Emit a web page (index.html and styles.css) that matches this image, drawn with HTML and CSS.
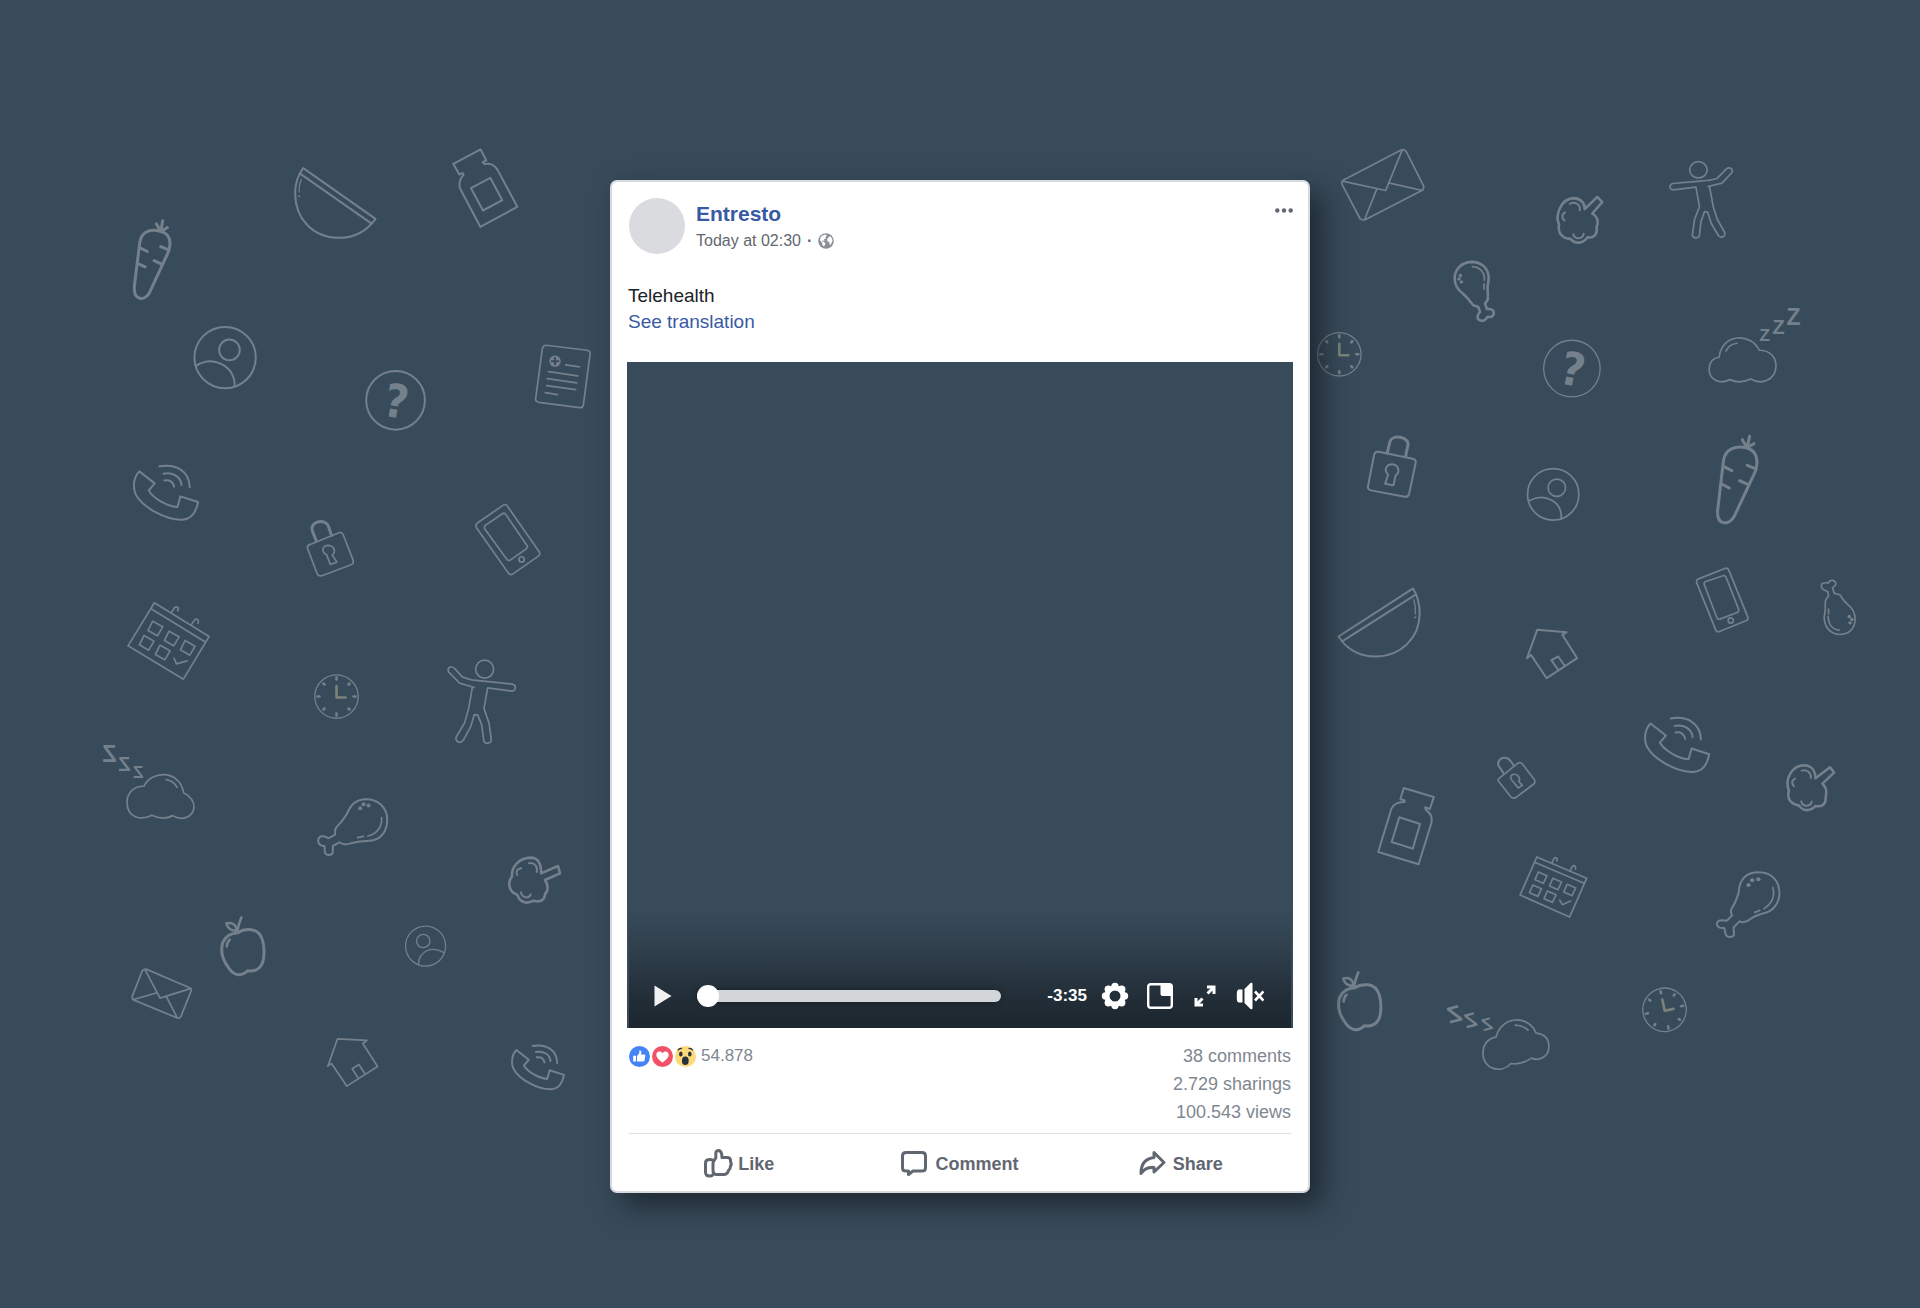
FILE: index.html
```html
<!DOCTYPE html>
<html lang="en">
<head>
<meta charset="utf-8">
<meta name="viewport" content="width=device-width, initial-scale=1">
<title>Entresto - Telehealth</title>
<link rel="stylesheet" href="styles.css">
</head>
<body>
<svg class="doodles" viewBox="0 0 1920 1308" preserveAspectRatio="xMidYMid slice" aria-hidden="true">
  <defs>
    <g id="clock">
      <circle class="thin" r="21.7"/>
      <path class="bold" d="M0-17v-2M0 17v2M-17 0h-2M17 0h2M-12-12l-1-1M12-12l1-1M-12 12l-1 1M12 12l1 1"/>
      <path class="hands" d="M0-10.500V1H9"/>
    </g>
    <g id="call">
      <path d="M120 96L166 132L148 153C160 175 200 200 234 203L243 171L296 188C290 220 275 240 248 241C200 242 130 205 109 165C98 140 105 110 120 96Z"/>
      <path d="M180 81C230 72 270 95 271 144M192 103C220 98 245 112 246 137M195 123C210 120 222 128 224 142"/>
    </g>
    <g id="apple">
      <path class="heavy" d="M445 636Q412 638 400 665C390 700 405 725 420 745C438 768 460 765 474 750C500 755 518 740 522 715C527 680 522 630 485 627Q462 625 445 636Z"/>
      <path class="bold" d="M443 634Q447 610 456 590M443 630Q415 630 411 608Q438 602 443 630ZM421 657Q412 665 412 677"/>
    </g>
    <path id="day" d="M-8-22L22-5L6 22L-22 6Z"/>
    <path id="day-small" d="M-7-17L17-6L7 17L-16 6Z"/>
  </defs>

  <!-- left side, top -->
  <g transform="translate(100 130) scale(.33333)">
    <path class="heavy" d="M184 304C162 296 126 298 121 338L105 468C102 513 135 513 150 488L208 363C217 333 210 310 184 304Z"/>
    <path class="heavy" d="M184 304L171 281M184 304L190 272M184 304L204 292M120 352L144 364M116 400L137 410M184 349L208 359M164 391L187 402"/>
    <path d="M611 114L828 266C800 305 765 323 718 323C640 323 587 265 587 190C587 160 595 135 611 114ZM604 132L814 279"/>
    <path class="thin" d="M605 148Q598 165 599 185"/><circle class="dot" cx="599" cy="198" r="3"/>
    <path d="M1061 101L1143 58L1160 91L1149 96L1155 102C1170 98 1185 105 1194 120L1253 230L1142 290L1083 178C1076 165 1080 145 1092 134L1089 129L1079 133ZM1114 174L1172 143L1208 210L1150 241Z"/>
    <circle cx="377" cy="682" r="92"/><circle cx="390" cy="659" r="31"/><path d="M291 706C340 675 405 705 406 767"/>
    <circle cx="888" cy="810" r="88"/>
    <path class="fine" d="M1340 645L1462 660Q1473 662 1471 672L1451 824Q1449 833 1440 832L1317 816Q1306 813 1308 804L1328 655Q1330 645 1340 645Z"/>
    <path class="fine" d="M1398 704L1439 710M1347 724L1434 737M1343 745L1431 758M1341 766L1428 778M1337 787L1373 793"/>
    <circle class="dot" cx="1366" cy="693" r="17"/><path class="cut" d="M1366 683V703M1356 693H1376"/>
  </g>
  <text class="mark" transform="translate(394 417) rotate(10)">?</text>

  <!-- left side, middle -->
  <g transform="translate(100 439) scale(.33333)">
    <use href="#call"/>
    <path class="fine" d="M632 315L718 280Q727 277 731 286L761 363Q763 372 755 376L667 409Q657 411 653 403L624 327Q622 318 632 315Z"/>
    <path class="heavy" d="M650 304L638 273C632 243 680 238 687 261L696 288"/>
    <path class="fine" d="M682 347C662 335 670 318 687 318C705 320 710 338 698 347L712 368L692 375Z"/>
    <path class="fine" d="M1133 251L1210 198Q1218 193 1223 200L1319 338Q1323 345 1316 350L1239 404Q1231 408 1226 401L1130 264Q1127 256 1133 251Z"/>
    <path class="fine" d="M1157 258L1208 223Q1215 219 1219 226L1282 318Q1285 324 1280 328L1232 362Q1225 364 1222 360L1155 268Q1153 262 1157 258Z"/>
    <circle class="fine" cx="1266" cy="360" r="8"/>
    <path class="fine" d="M165 490L329 591L252 719L86 619ZM155 508L319 608M217 518L225 505C233 498 240 505 235 514M277 554L285 542C293 535 300 542 296 551M224 656L231 673L263 664"/>
    <g class="fine"><use href="#day" x="168" y="567"/><use href="#day" x="217" y="597"/><use href="#day" x="265" y="625"/><use href="#day" x="142" y="610"/><use href="#day" x="190" y="639"/></g>
    <circle class="fine" cx="1155" cy="689" r="27"/>
    <path class="fine" d="M1116 721L1238 734Q1248 737 1247 746Q1245 755 1236 755L1164 745L1153 807L1168 850L1175 900Q1175 910 1164 911Q1153 911 1152 900L1146 855L1134 826L1124 825L1113 862L1091 902Q1083 912 1073 906Q1066 898 1071 890L1095 850L1107 807L1118 744L1124 744L1080 731L1047 697Q1043 688 1050 683Q1060 681 1064 686L1089 713Z"/>
  </g>
  <use href="#clock" x="337" y="696"/>

  <!-- left side, bottom -->
  <g transform="translate(90 720) scale(.33333)">
    <path class="fine" d="M164 197C185 150 270 145 283 217C325 235 325 290 275 293Q262 292 250 285Q220 300 187 284C155 300 113 292 113 245C113 215 135 196 164 197ZM230 177Q252 180 263 200"/>
    <path d="M737 342L716 353Q705 345 696 347Q685 350 686 362Q686 374 705 377L706 395Q708 403 718 403Q729 403 730 392L730 376L750 365Q763 375 780 369Q800 362 840 360C875 358 893 330 893 297C893 260 865 236 830 236C800 236 785 250 772 280Q760 300 740 321Q735 328 737 342Z"/>
    <path class="fine" d="M876 291C878 315 865 340 835 346M804 351L822 347"/>
    <g class="dot"><circle cx="812" cy="263" r="6"/><circle cx="822" cy="251" r="6"/><circle cx="837" cy="255" r="6"/></g>
    <path class="bold" d="M1354 458L1405 436L1411 458L1366 478C1380 500 1372 515 1366 520C1365 540 1350 545 1332 540C1310 552 1290 545 1283 522C1258 515 1252 485 1267 468C1265 440 1285 412 1325 411C1345 412 1356 430 1354 458Z"/>
    <path d="M1318 428C1335 423 1345 440 1341 454M1295 443C1280 445 1278 455 1283 463M1294 515C1298 533 1318 535 1323 521"/>
    <use href="#apple"/>
    <g class="thin"><circle cx="1008" cy="676" r="60"/><circle cx="1001" cy="661" r="20"/><path d="M986 731C990 690 1025 675 1062 695"/></g>
    <path class="fine" d="M172 746L299 800Q308 804 305 811L275 886Q271 895 262 891L134 838Q126 834 129 826L158 752Q162 743 172 746ZM168 749L212 832L305 803M130 837L203 816M263 890L231 828"/>
    <path class="fine" d="M744 954L832 959L820 968L864 1037L772 1096L726 1028L715 1036ZM806 1072L788 1044L808 1031L826 1059"/>
    <use href="#call" transform="translate(1183 910) scale(.81)"/>
  </g>
  <g class="snore">
    <text class="z-large" transform="translate(110 761) scale(-1 1)">Z</text>
    <text class="z-medium" transform="translate(125 770) scale(-1 1)">Z</text>
    <text class="z-small" transform="translate(139 777) scale(-1 1)">Z</text>
  </g>

  <!-- right side, top -->
  <g transform="translate(1300 130) scale(.35714 .33333)">
    <path class="fine" d="M120 150L282 60Q292 56 297 65L345 167Q347 176 340 181L183 268Q172 272 167 265L118 165Q113 155 120 150ZM118 153L239 181L285 60M180 268L214 177M342 181L247 158"/>
    <path class="bold" d="M796 237L831 200L845 216L817 250C835 262 834 280 829 290C832 315 820 325 804 321C790 342 768 342 756 326C730 325 720 305 724 283C712 255 730 205 765 204C785 205 797 220 796 237Z"/>
    <path d="M754 221C770 212 785 225 782 240M741 247C730 252 732 265 739 271M764 312C768 328 790 328 793 311"/>
    <circle class="fine" cx="1114" cy="119" r="24.500"/>
    <path class="fine" d="M1110 154L1042 160Q1034 163 1034 171Q1036 179 1044 179L1107 171L1117 230L1103 268L1097 315Q1099 323 1107 323Q1115 323 1117 315L1121 275L1131 244L1140 246L1150 280L1170 316Q1177 325 1186 318Q1190 312 1187 306L1167 268L1156 232L1145 169L1141 169L1180 159L1208 127Q1211 119 1204 114Q1197 112 1192 117L1166 145Q1155 150 1110 154Z"/>
    <path class="bold" d="M484 525L498 530L503 545Q493 557 497 566Q503 574 514 571Q521 566 524 560Q538 562 541 552Q543 540 533 537L522 536L517 520Q526 510 525 500L524 470Q527 455 527 440C525 412 505 395 478 395C450 397 432 418 432 445C432 465 442 480 455 490Q470 505 484 525Z"/>
    <path class="fine" d="M482 409C505 410 517 430 515 450M514 461V476"/>
    <g class="dot"><circle cx="448" cy="436" r="5"/><circle cx="444" cy="446" r="5"/><circle cx="451" cy="455" r="5"/></g>
    <ellipse class="thin" cx="760" cy="715" rx="79" ry="85"/>
    <path class="fine" d="M1172 681C1180 605 1265 610 1284 660C1315 660 1331 680 1331 708C1330 750 1290 765 1260 746Q1230 762 1202 748C1170 765 1143 745 1144 715C1145 695 1155 683 1172 681ZM1191 662Q1200 642 1222 639"/>
  </g>
  <use href="#clock" x="1339" y="354"/>
  <text class="mark" transform="translate(1569 385) rotate(12)">?</text>
  <g class="snore">
    <text class="z-large" x="1793" y="325">Z</text>
    <text class="z-medium" x="1778" y="334">Z</text>
    <text class="z-small" x="1764" y="341">Z</text>
  </g>

  <!-- right side, middle -->
  <g transform="translate(1299 410) scale(.36351 .33333)">
    <path d="M218 124L312 145Q322 148 320 157L302 251Q299 260 290 259L197 240Q187 237 189 227L206 132Q209 123 218 124Z"/>
    <path class="heavy" d="M242 127L249 95C255 70 302 80 299 103L292 139"/>
    <path d="M244 193C230 175 242 162 256 162C275 165 277 187 265 195L259 225L236 220Z"/>
    <g class="fine"><ellipse cx="698" cy="252" rx="70.500" ry="77"/><ellipse cx="708" cy="232" rx="24" ry="26"/><path d="M632 271C675 245 725 275 720 326"/></g>
    <path class="heavy" d="M1231 113C1200 105 1170 115 1166 152L1150 300C1147 345 1180 348 1197 315L1255 180C1263 145 1258 122 1231 113Z"/>
    <path class="heavy" d="M1231 112L1218 88M1231 112L1238 78M1231 112L1250 100M1166 168L1189 181M1160 220L1182 233M1231 165L1254 175M1210 211L1235 223"/>
    <path d="M313 534L108 678C130 715 165 738 210 738C280 738 331 680 331 610C331 580 325 555 313 534ZM319 553L120 691"/>
    <path class="thin" d="M315 568Q321 590 319 610"/><circle class="dot" cx="319" cy="620" r="3"/>
    <path d="M654 658L735 665L723 673L764 743L680 803L637 733L626 743ZM711 777L693 749L712 738L729 765"/>
    <path class="fine" d="M1096 506L1170 474Q1178 471 1181 480L1233 620Q1235 628 1228 631L1155 663Q1148 666 1145 659L1092 516Q1091 509 1096 506ZM1116 514L1165 496Q1171 495 1173 500L1208 597Q1209 603 1204 606L1156 626Q1150 627 1148 622L1113 521Q1112 516 1116 514Z"/>
    <ellipse class="fine" cx="1186" cy="630" rx="7" ry="8"/>
    <path class="fine" d="M1455 558L1453 544L1440 537Q1432 530 1437 520Q1445 515 1454 518Q1458 508 1468 510Q1477 515 1474 524L1466 532L1470 548L1486 553Q1495 570 1510 585Q1527 600 1528 625C1528 655 1510 672 1485 672C1460 670 1443 650 1443 620Q1447 600 1446 580Q1445 565 1455 558ZM1454 618C1455 645 1468 658 1484 659M1455 596V610"/>
    <g class="dot"><circle cx="1512" cy="618" r="5"/><circle cx="1519" cy="627" r="5"/><circle cx="1514" cy="637" r="5"/></g>
  </g>

  <!-- right side, bottom -->
  <g transform="translate(1299 690) scale(.36351 .33333)">
    <path class="fine" d="M551 262L602 217Q609 214 614 221L647 268Q649 276 644 281L595 321Q587 325 582 319L547 271Q545 265 551 262ZM590 276C575 262 582 250 592 251C605 253 608 267 603 272L613 284L602 292Z"/>
    <path d="M561 247L547 224C545 200 570 195 580 210L590 225"/>
    <path d="M287 292L370 319L359 355L346 350L348 358C362 368 367 382 363 398L328 521L217 484L253 355C258 343 270 333 290 334L289 329L278 326ZM275 380L332 400L312 474L254 454Z"/>
    <path class="fine" d="M653 499L790 563L743 679L607 613ZM647 515L783 578M695 516L700 504C706 498 711 503 708 511M745 540L750 528C757 521 761 528 759 535M716 628L723 642L746 631"/>
    <g class="fine"><use href="#day-small" x="664" y="561"/><use href="#day-small" x="704" y="580"/><use href="#day-small" x="743" y="598"/><use href="#day-small" x="649" y="600"/><use href="#day-small" x="689" y="618"/></g>
    <path class="bold" d="M1419 263L1459 230L1470 246L1438 279C1453 295 1449 310 1447 320C1448 343 1435 350 1419 346C1405 363 1385 363 1374 345C1350 340 1340 325 1346 300C1333 265 1355 224 1388 224C1408 225 1419 240 1419 263Z"/>
    <path d="M1381 240C1395 235 1408 247 1406 262M1363 264C1352 270 1354 282 1360 287M1380 332C1383 350 1405 350 1409 333"/>
    <path d="M1190 674L1175 690L1160 689Q1148 690 1148 701Q1150 713 1168 712L1172 730Q1175 740 1186 739Q1196 737 1195 728L1194 710L1210 692Q1225 700 1240 685Q1255 673 1280 667C1305 660 1320 635 1320 608C1320 570 1298 545 1263 545C1230 545 1210 565 1208 605Q1200 635 1188 655Q1184 662 1190 674Z"/>
    <path class="fine" d="M1302 591C1308 615 1300 640 1277 654M1252 665L1266 659"/>
    <g class="dot"><circle cx="1235" cy="583" r="6"/><circle cx="1245" cy="569" r="6"/><circle cx="1262" cy="566" r="6"/></g>
    <path class="fine" d="M541 1039C555 975 630 970 651 1027C675 1030 687 1045 686 1070C685 1098 660 1112 638 1102Q610 1123 582 1118C555 1150 505 1135 505 1088C505 1060 520 1042 541 1039ZM594 1003Q615 1004 629 1018"/>
  </g>
  <use href="#call" transform="translate(1610 691) scale(.33333)"/>
  <use href="#apple" transform="translate(1206 775) scale(.33333)"/>
  <use href="#clock" transform="translate(1664 1009) rotate(-12)"/>
  <g class="snore">
    <text class="z-large" transform="translate(1456 1021) rotate(-15) scale(-1 1)">Z</text>
    <text class="z-medium" transform="translate(1472 1026) rotate(-15) scale(-1 1)">Z</text>
    <text class="z-small" transform="translate(1488 1029) rotate(-15) scale(-1 1)">Z</text>
  </g>
</svg>

<main class="page">
  <article class="post">
    <header class="post-header">
      <span class="avatar"></span>
      <div class="byline">
        <a class="author" href="#">Entresto</a>
        <div class="meta">
          <span>Today at 02:30</span><b class="separator">·</b>
          <svg class="globe" viewBox="0 0 16 16" role="img" aria-label="Public"><circle cx="8" cy="8" r="7.800" fill="#8b9098"/><path d="M2.500 4.500Q4 2 7 1.500L9 2.500L7.500 4L8 5.500L6 6L6.500 8L4.500 7.500L3.500 8L6 9L7.500 10.500L6 13.500L4.500 12L4 9.500L2 7.500ZM10 5L12 3L14 5.500L14.500 8L12.500 12L11.500 11.500V9L9.500 8.500L9 6.500Z" fill="#fff"/></svg>
        </div>
      </div>
      <button class="more" type="button" aria-label="More options"><svg viewBox="0 0 18 5"><circle cx="2.300" cy="2.500" r="2.200"/><circle cx="9" cy="2.500" r="2.200"/><circle cx="15.700" cy="2.500" r="2.200"/></svg></button>
    </header>

    <div class="post-text">
      <p>Telehealth</p>
      <a href="#">See translation</a>
    </div>

    <section class="video" aria-label="Video player">
      <div class="controls">
        <button type="button" class="play" aria-label="Play"><svg viewBox="0 0 18 22"><path d="M.5.500L17.500 11L.5 21.500Z" fill="#f2f0f0"/></svg></button>
        <input class="seek" type="range" min="0" max="215" value="0" aria-label="Seek">
        <span class="remaining">-3:35</span>
        <div class="tools">
          <button type="button" aria-label="Settings"><svg viewBox="0 0 28 28"><circle cx="14" cy="14" r="8" fill="none" stroke="#fff" stroke-width="5"/><g fill="#fff"><circle cx="14" cy="4.500" r="3.700"/><circle cx="20.700" cy="7.300" r="3.700"/><circle cx="23.500" cy="14" r="3.700"/><circle cx="20.700" cy="20.700" r="3.700"/><circle cx="14" cy="23.500" r="3.700"/><circle cx="7.300" cy="20.700" r="3.700"/><circle cx="4.500" cy="14" r="3.700"/><circle cx="7.300" cy="7.300" r="3.700"/></g></svg></button>
          <button type="button" aria-label="Picture in picture"><svg viewBox="0 0 28 28"><rect x="2.200" y="2.200" width="23.600" height="23.600" rx="2.500" fill="none" stroke="#fff" stroke-width="2.400"/><path d="M14.500 2H26V14H16.500Q14.500 14 14.500 12Z" fill="#fff"/></svg></button>
          <button type="button" aria-label="Full screen"><svg viewBox="0 0 28 28" fill="none" stroke="#fff" stroke-width="3"><path d="M16 5H23V12M22.500 5.500L16.500 11.500M5 16V23H12M5.500 22.500L11.500 16.500"/></svg></button>
          <button type="button" aria-label="Unmute"><svg viewBox="0 0 28 28"><path d="M3 7.500H6.500V20.500H3Q.8 20.500.8 16V12Q.8 7.500 3 7.500ZM8.500 7L14.500 1Q16.500 0 16.500 2V26Q16.500 28 14.500 27L8.500 21Z" fill="#fff"/><path d="M19 9.500L27.500 18.500M27.500 9.500L19 18.500" fill="none" stroke="#fff" stroke-width="2.600"/></svg></button>
        </div>
      </div>
    </section>

    <div class="stats">
      <div class="reactions">
        <svg viewBox="0 0 21 21" role="img" aria-label="Like"><circle cx="10.500" cy="10.500" r="10.500" fill="#4484f7"/><path d="M4.200 9.800H7V15.500H4.200ZM8 10L10.300 7.200V4.600Q12.400 3.800 12.400 6.500L12 8.600H15.500Q16.800 9 16.200 10.200L15.600 14.300Q15.300 15.500 14 15.500H8Z" fill="#fff"/></svg>
        <svg viewBox="0 0 21 21" role="img" aria-label="Love"><circle cx="10.500" cy="10.500" r="10.500" fill="#f25268"/><path d="M10.500 16.500C6.500 13.500 4.300 11.500 4.300 8.700C4.300 5.200 8.800 4.200 10.500 7.200C12.200 4.200 16.700 5.200 16.700 8.700C16.700 11.500 14.500 13.500 10.500 16.500Z" fill="#fff"/></svg>
        <svg viewBox="0 0 21 21" role="img" aria-label="Wow"><circle cx="10.500" cy="10.500" r="10.500" fill="#fcd97b"/><g fill="#26333d"><ellipse cx="5.800" cy="8" rx="1.800" ry="2.500"/><ellipse cx="14.800" cy="8" rx="1.800" ry="2.500"/><ellipse cx="10.300" cy="14.800" rx="3.400" ry="4.300"/></g><path d="M2.800 4.300Q4.500 1.800 7 2.600M13.600 2.600Q16 1.800 17.800 4.300" fill="none" stroke="#26333d" stroke-width="1.300"/></svg>
        <span class="total">54.878</span>
      </div>
      <ul class="counts">
        <li>38 comments</li>
        <li>2.729 sharings</li>
        <li>100.543 views</li>
      </ul>
    </div>

    <footer class="actions">
      <button type="button"><svg viewBox="0 0 28 28"><path d="M9.500 11.500Q9 9.500 6 9.500Q1.500 9.500 1.500 13V22Q1.500 26 5.500 26Q8.500 26 9.500 24M9.500 11.500L11.800 8V3Q12 .5 15 .5Q18 1.500 18 7.500H23.500Q27 8 26.500 11.500Q28 14 26.500 16Q26.500 19 24.500 20.500Q23.500 24.500 20.500 24.500H12Q9 24 9 20.500V14Q9 12.500 9.500 11.500Z"/></svg>Like</button>
      <button type="button"><svg viewBox="0 0 28 28"><path d="M5 2.500H21Q24.500 2.500 24.500 6V18Q24.500 21 21 21H12L7.500 24.500V21H5Q1.500 21 1.500 18V6Q1.500 2.500 5 2.500Z"/></svg>Comment</button>
      <button type="button"><svg viewBox="0 0 28 28"><path d="M15 2.500L25 12.500L15 22V17.500Q7 16.500 2 23.500Q2 9 15 7.500Z"/></svg>Share</button>
    </footer>
  </article>
</main>
</body>
</html>
```
FILE: styles.css
```css
* {
  box-sizing: border-box;
}

body {
  margin: 0;
  position: relative;
  min-height: 100vh;
  overflow-x: hidden;
  background: #384b5a;
  font-family: "Liberation Sans", Arial, sans-serif;
  color: #1d2129;
}

p,
ul {
  margin: 0;
  padding: 0;
  list-style: none;
}

a {
  color: #385aa3;
  text-decoration: none;
}

button {
  display: flex;
  align-items: center;
  justify-content: center;
  padding: 0;
  border: 0;
  background: none;
  font: inherit;
  color: inherit;
  cursor: pointer;
}

/* Background doodles */

.doodles {
  position: absolute;
  inset: 0;
  width: 100%;
  height: 100%;
  fill: none;
  stroke: #74818c;
  stroke-width: 2px;
  stroke-linejoin: round;
  stroke-linecap: round;
}

.doodles path,
.doodles circle,
.doodles ellipse {
  vector-effect: non-scaling-stroke;
}

.doodles .thin {
  stroke-width: 1.3px;
}

.doodles .fine {
  stroke-width: 1.7px;
}

.doodles .bold {
  stroke-width: 2.6px;
}

.doodles .heavy {
  stroke-width: 3px;
}

.doodles .hands {
  stroke: #7b8378;
  stroke-width: 2.6px;
}

.doodles .dot {
  fill: #74818c;
  stroke: none;
}

.doodles .cut {
  stroke: #384b5a;
  stroke-width: 2px;
}

.doodles text {
  fill: #74818c;
  stroke: none;
  text-anchor: middle;
  font-family: "Liberation Sans", Arial, sans-serif;
  font-weight: 700;
}

.doodles .mark {
  font-family: "DejaVu Sans Condensed", "DejaVu Sans", sans-serif;
  font-size: 46px;
}

.z-large {
  font-size: 23px;
}

.z-medium {
  font-size: 20px;
}

.z-small {
  font-size: 17px;
}

/* Post */

.page {
  position: relative;
  display: flex;
  justify-content: center;
  padding: 180px 16px 116px;
}

.post {
  width: 100%;
  max-width: 700px;
  padding: 16px 15px 0;
  border: 2px solid #d8dae1;
  border-radius: 7px;
  background: #fff;
  box-shadow: 12px 12px 28px rgba(16, 22, 28, 0.65);
}

.post-header {
  display: flex;
  align-items: flex-start;
  gap: 11px;
  padding: 0 0 0 2px;
}

.avatar {
  width: 56px;
  height: 56px;
  border-radius: 50%;
  background: #dadbdf;
}

.byline {
  flex: 1;
  padding-top: 3px;
}

.author {
  display: block;
  font-size: 21px;
  line-height: 26px;
  font-weight: 700;
}

.meta {
  display: flex;
  align-items: center;
  font-size: 16px;
  line-height: 28px;
  color: #616770;
}

.separator {
  padding: 0 6px;
}

.globe {
  width: 16px;
  height: 16px;
}

.more {
  padding-top: 10px;
}

.more svg {
  width: 18px;
  height: 5px;
  fill: #616770;
}

.post-text {
  padding: 28px 1px 27px;
  font-size: 19px;
  line-height: 26px;
}

/* Video */

.video {
  display: flex;
  flex-direction: column;
  justify-content: flex-end;
  aspect-ratio: 1;
  background: #384b5a;
}

.controls {
  display: flex;
  align-items: center;
  margin: 0 2px;
  padding: 72px 27px 18px 25px;
  background: linear-gradient(#384b5a, #2d3c49 42%, #232f39 70%, #1c252e);
}

.play svg {
  display: block;
  width: 18px;
  height: 22px;
}

.seek {
  flex: 1;
  min-width: 0;
  height: 24px;
  margin: 0 46px 0 25px;
  appearance: none;
  background: none;
}

.seek::-webkit-slider-runnable-track {
  height: 12px;
  border-radius: 6px;
  background: #d3d6d8;
  box-shadow: 0 0 6px rgba(0, 0, 0, 0.4);
}

.seek::-webkit-slider-thumb {
  appearance: none;
  width: 22px;
  height: 22px;
  margin-top: -5px;
  border-radius: 50%;
  background: #fff;
}

.remaining {
  font-size: 17px;
  font-weight: 700;
  color: #fff;
}

.tools {
  display: flex;
  gap: 17px;
  margin-left: 14px;
}

.tools svg {
  display: block;
  width: 28px;
  height: 28px;
}

/* Stats and actions */

.stats {
  display: flex;
  justify-content: space-between;
  margin: 0 2px;
  padding: 14px 0 7px;
  border-bottom: 1px solid #dddfe2;
  font-size: 18px;
  line-height: 28px;
  color: #7f8791;
}

.reactions {
  display: flex;
  align-items: center;
  height: 28px;
  gap: 2px;
}

.reactions svg {
  width: 21px;
  height: 21px;
}

.total {
  padding-left: 3px;
  font-size: 17px;
}

.counts {
  text-align: right;
}

.actions {
  display: grid;
  grid-template-columns: repeat(3, 1fr);
  margin: 0 2px;
  padding: 14px 0 11px;
}

.actions button {
  gap: 6px;
  height: 32px;
  font-size: 18px;
  font-weight: 700;
  color: #616770;
}

.actions svg {
  width: 28px;
  height: 28px;
  overflow: visible;
  fill: none;
  stroke: #616770;
  stroke-width: 3px;
  stroke-linejoin: round;
}
```
